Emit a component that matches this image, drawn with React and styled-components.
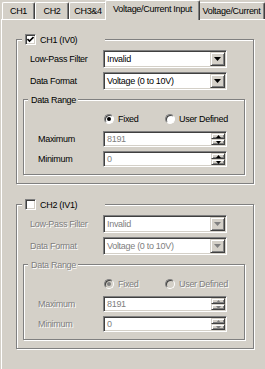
import React from 'react'
import styled, { createGlobalStyle, css } from 'styled-components'

const FACE = '#d4d0c8'
const SHADOW = '#808080'
const DARK = '#404040'

const GlobalStyle = createGlobalStyle`
  html, body {
    margin: 0;
    padding: 0;
    background: ${FACE};
  }
  body {
    font-family: "Liberation Sans", Arial, sans-serif;
    font-size: 9px;
    letter-spacing: -0.3px;
    color: #000;
  }
`

const tabs = [
  { label: 'CH1', w: 33 },
  { label: 'CH2', w: 34 },
  { label: 'CH3&4', w: 38 },
  { label: 'Voltage/Current Input', w: 91, active: true },
  { label: 'Voltage/Current', w: 67 },
]

const Check = () => (
  <svg width="7" height="7" viewBox="0 0 7 7">
    <polyline points="0.5,3 2.5,5 6.5,1" fill="none" stroke="#000" strokeWidth="1.6"/>
  </svg>
)

const Arrow = ({ up, size = 7, color = '#000' }) => {
  const h = Math.ceil(size / 2)
  return (
    <svg width={size} height={h} viewBox={`0 0 ${size} ${h}`}>
      <polygon
        points={up ? `0,${h} ${size},${h} ${size / 2},0` : `0,0 ${size},0 ${size / 2},${h}`}
        fill={color}
      />
    </svg>
  )
}

const Combo = ({ value, disabled }) => (
  <Field $w={124} $h={18}>
    <FieldText $disabled={disabled}>{value}</FieldText>
    <DropButton>
      <Arrow size={7} color={disabled ? SHADOW : '#000'}/>
    </DropButton>
  </Field>
)

const Spin = ({ value, disabled }) => (
  <Field $w={124} $h={16}>
    <FieldText $disabled>{value}</FieldText>
    <SpinButtons>
      <SpinButton><Arrow up size={5} color={disabled ? SHADOW : '#000'}/></SpinButton>
      <SpinButton><Arrow size={5} color={disabled ? SHADOW : '#000'}/></SpinButton>
    </SpinButtons>
  </Field>
)

const Channel = ({ title, enabled }) => {
  const off = !enabled
  return (
    <Group $w={238}>
      <Legend $left={5} $width={83}>
        <CheckBox>{enabled && <Check/>}</CheckBox>
        <span>{title}</span>
      </Legend>
      <Row>
        <Label $w={73} $disabled={off}>Low-Pass Filter</Label>
        <Combo value="Invalid" disabled={off}/>
      </Row>
      <Row>
        <Label $w={73} $disabled={off}>Data Format</Label>
        <Combo value="Voltage (0 to 10V)" disabled={off}/>
      </Row>
      <RangeGroup $w={222}>
        <Legend $left={4}>
          <Label $disabled={off}>Data Range</Label>
        </Legend>
        <RadioRow>
          <RadioItem>
            <RadioDot $checked $disabled={off}/>
            <Label $disabled={off}>Fixed</Label>
          </RadioItem>
          <RadioItem>
            <RadioDot $disabled={off}/>
            <Label $disabled={off}>User Defined</Label>
          </RadioItem>
        </RadioRow>
        <SpinRow>
          <Label $w={65} $disabled={off}>Maximum</Label>
          <Spin value="8191" disabled={off}/>
        </SpinRow>
        <SpinRow>
          <Label $w={65} $disabled={off}>Minimum</Label>
          <Spin value="0" disabled={off}/>
        </SpinRow>
      </RangeGroup>
    </Group>
  )
}

const App = () => (
  <Window>
    <GlobalStyle/>
    <TabStrip>
      {tabs.map(t => (
        <Tab key={t.label} $w={t.w} $active={t.active}>{t.label}</Tab>
      ))}
    </TabStrip>
    <Panel>
      <Channel title="CH1 (IV0)" enabled/>
      <Channel title="CH2 (IV1)"/>
    </Panel>
  </Window>
)

const Window = styled.div`
    width: 265px;
    height: 369px;
    overflow: hidden;
    background: ${FACE};
`

const TabStrip = styled.div`
    display: flex;
    align-items: flex-end;
    height: 19px;
    padding-left: 2px;
    white-space: nowrap;
`

const Tab = styled.div`
    position: relative;
    flex: none;
    box-sizing: border-box;
    width: ${p => p.$w}px;
    height: 17px;
    display: flex;
    align-items: center;
    justify-content: center;
    padding-bottom: 1px;
    background: ${FACE};
    border-top: 1px solid #fff;
    border-left: 1px solid #fff;
    border-right: 1px solid ${DARK};
    border-radius: 2px 2px 0 0;
    box-shadow: inset -1px 0 0 ${SHADOW};
    ${p => p.$active && css`
        width: ${p.$w + 4}px;
        height: 20px;
        margin: 0 -2px -1px;
        padding-bottom: 4px;
        z-index: 1;
    `}
`

const Panel = styled.div`
    box-sizing: border-box;
    height: 350px;
    margin-left: 1px;
    padding: 19px 0 0 14px;
    border-top: 1px solid #fff;
    border-left: 1px solid #fff;
`

const Group = styled.div`
    position: relative;
    box-sizing: border-box;
    width: ${p => p.$w}px;
    padding: 10px 0 8px 6px;
    border: 1px solid ${SHADOW};
    box-shadow: inset 1px 1px 0 #fff, 1px 1px 0 #fff;

    & + & {
        margin-top: 20px;
    }
`

const RangeGroup = styled(Group)`
    margin-top: 9px;
    padding: 13px 0 7px 0;
`

const Legend = styled.div`
    position: absolute;
    top: -7px;
    left: ${p => p.$left}px;
    ${p => p.$width && `width: ${p.$width}px;`}
    height: 13px;
    box-sizing: border-box;
    display: flex;
    align-items: center;
    gap: 4px;
    padding: 0 2px 0 3px;
    background: ${FACE};
`

const CheckBox = styled.span`
    box-sizing: border-box;
    width: 11px;
    height: 11px;
    display: flex;
    align-items: center;
    justify-content: center;
    background: #fff;
    border: 1px solid;
    border-color: ${SHADOW} #fff #fff ${SHADOW};
    box-shadow: inset 1px 1px 0 ${DARK}, inset -1px -1px 0 ${FACE};
`

const Row = styled.div`
    display: flex;
    align-items: center;
    height: 18px;
    padding-left: 7px;

    & + & {
        margin-top: 4px;
    }
`

const SpinRow = styled.div`
    display: flex;
    align-items: center;
    height: 16px;
    padding-left: 14px;
    margin-top: 4px;
`

const Label = styled.span`
    flex: none;
    ${p => p.$w && `width: ${p.$w}px;`}
    white-space: nowrap;
    color: ${p => p.$disabled ? SHADOW : '#000'};
    text-shadow: ${p => p.$disabled ? '1px 1px 0 #fff' : 'none'};
`

const Field = styled.div`
    box-sizing: border-box;
    width: ${p => p.$w}px;
    height: ${p => p.$h}px;
    display: flex;
    align-items: stretch;
    padding: 1px;
    background: #fff;
    border: 1px solid;
    border-color: ${SHADOW} #fff #fff ${SHADOW};
    box-shadow: inset 1px 1px 0 ${DARK}, inset -1px -1px 0 ${FACE};
`

const FieldText = styled.span`
    flex: 1;
    display: flex;
    align-items: center;
    padding-left: 2px;
    white-space: nowrap;
    color: ${p => p.$disabled ? SHADOW : '#000'};
`

const raised = css`
    box-sizing: border-box;
    display: flex;
    align-items: center;
    justify-content: center;
    background: ${FACE};
    border: 1px solid;
    border-color: ${FACE} ${DARK} ${DARK} ${FACE};
    box-shadow: inset 1px 1px 0 #fff, inset -1px -1px 0 ${SHADOW};
`

const DropButton = styled.span`
    ${raised};
    width: 15px;
`

const SpinButtons = styled.span`
    display: flex;
    flex-direction: column;
    width: 14px;
`

const SpinButton = styled.span`
    ${raised};
    flex: 1;
`

const RadioRow = styled.div`
    display: grid;
    grid-template-columns: 61px auto;
    align-items: center;
    height: 12px;
    padding-left: 80px;
    margin-bottom: 6px;
`

const RadioItem = styled.label`
    display: flex;
    align-items: center;
    gap: 4px;
`

const RadioDot = styled.span`
    box-sizing: border-box;
    width: 10px;
    height: 10px;
    display: flex;
    align-items: center;
    justify-content: center;
    border-radius: 50%;
    border: 1px solid;
    border-color: ${SHADOW} #fff #fff ${SHADOW};
    box-shadow: inset 1px 1px 0 ${DARK};
    background: ${p => p.$disabled ? FACE : '#fff'};

    &::after {
        content: '';
        display: ${p => p.$checked ? 'block' : 'none'};
        width: 4px;
        height: 4px;
        border-radius: 50%;
        background: ${p => p.$disabled ? SHADOW : '#000'};
    }
`

export default App
